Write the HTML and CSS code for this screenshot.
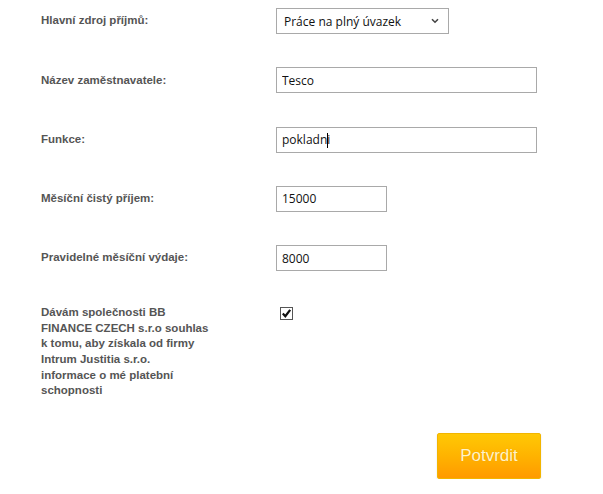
FILE: index.html
```html
<!DOCTYPE html>
<html lang="cs">
<head>
<meta charset="utf-8">
<title>Formulář</title>
<link rel="stylesheet" href="styles.css">
</head>
<body>
<form class="form">
  <div class="row">
    <label class="label">Hlavní zdroj příjmů:</label>
    <div class="select-wrap">
      <select class="select">
        <option>Práce na plný úvazek</option>
      </select>
      <svg class="chevron" width="8" height="6" viewBox="0 0 8 6"><path d="M1 1.2 L4 4.2 L7 1.2" fill="none" stroke="#444" stroke-width="1.6"/></svg>
    </div>
  </div>
  <div class="row">
    <label class="label">Název zaměstnavatele:</label>
    <input class="input wide" type="text" value="Tesco">
  </div>
  <div class="row">
    <label class="label">Funkce:</label>
    <div class="field-wrap">
      <input class="input wide" type="text" value="pokladni">
      <span class="caret"></span>
    </div>
  </div>
  <div class="row">
    <label class="label">Měsíční čistý příjem:</label>
    <input class="input short" type="text" value="15000">
  </div>
  <div class="row">
    <label class="label">Pravidelné měsíční výdaje:</label>
    <input class="input short" type="text" value="8000">
  </div>
  <div class="row consent">
    <label class="label consent-text">Dávám společnosti BB<br>FINANCE CZECH s.r.o souhlas<br>k tomu, aby získala od firmy<br>Intrum Justitia s.r.o.<br>informace o mé platební<br>schopnosti</label>
    <span class="check">
      <svg width="11" height="11" viewBox="0 0 11 11"><path d="M1.8 5.6 L4.3 8.2 L9.2 1.8" fill="none" stroke="#111" stroke-width="2.2"/></svg>
    </span>
  </div>
  <div class="actions">
    <button type="button" class="submit">Potvrdit</button>
  </div>
</form>
</body>
</html>
```
FILE: styles.css
```css
html, body {
  margin: 0;
  padding: 0;
  background: #fff;
}

.form {
  padding: 8px 0 0 41px;
  display: flex;
  flex-direction: column;
  gap: 33.3px;
}

.row {
  display: flex;
  align-items: center;
  height: 26px;
}

.label {
  width: 235px;
  flex: none;
  font-family: "Liberation Sans", Arial, sans-serif;
  font-weight: bold;
  font-size: 11.5px;
  line-height: 15.6px;
  color: #555;
}

.select-wrap, .field-wrap {
  position: relative;
  display: flex;
}

.select {
  appearance: none;
  -webkit-appearance: none;
  width: 173px;
  height: 26px;
  margin: 0;
  padding: 0 0 0 7px;
  border: 1px solid #a9a9a9;
  border-radius: 0;
  background: #fff;
  font-family: "Open Sans", "Noto Sans", sans-serif;
  font-size: 12px;
  color: #111;
}

.chevron {
  position: absolute;
  right: 10px;
  top: 10px;
}

.input {
  box-sizing: border-box;
  height: 26px;
  margin: 0;
  padding: 0 0 0 5px;
  border: 1px solid #a9a9a9;
  border-radius: 0;
  background: #fff;
  font-family: "Open Sans", "Noto Sans", sans-serif;
  font-size: 12px;
  color: #111;
  outline: none;
}

.wide { width: 261px; }
.short { width: 111px; }

.caret {
  position: absolute;
  left: 51px;
  top: 6px;
  width: 1px;
  height: 15px;
  background: #000;
}

.row.consent {
  height: auto;
  align-items: flex-start;
  margin-top: 0.7px;
}

.consent-text {
  width: 200px;
  margin-right: 39px;
}

.check {
  box-sizing: border-box;
  width: 13px;
  height: 13px;
  margin-top: 2px;
  border: 1px solid #555;
  background: #fff;
  display: flex;
  align-items: center;
  justify-content: center;
}

.actions {
  padding-left: 396px;
  margin-top: 1px;
}

.submit {
  box-sizing: border-box;
  width: 104px;
  height: 46px;
  margin: 0;
  padding: 0;
  border: 1px solid #f2b500;
  border-radius: 2px;
  background: linear-gradient(to bottom, #ffc805 0%, #ffb300 50%, #ff9a00 100%);
  font-family: "Liberation Sans", Arial, sans-serif;
  font-size: 17px;
  color: #fff3c8;
  box-shadow: 0 1px 2px rgba(0,0,0,0.12);
  text-shadow: 0 0 1px rgba(200,120,0,0.4);
}
```
